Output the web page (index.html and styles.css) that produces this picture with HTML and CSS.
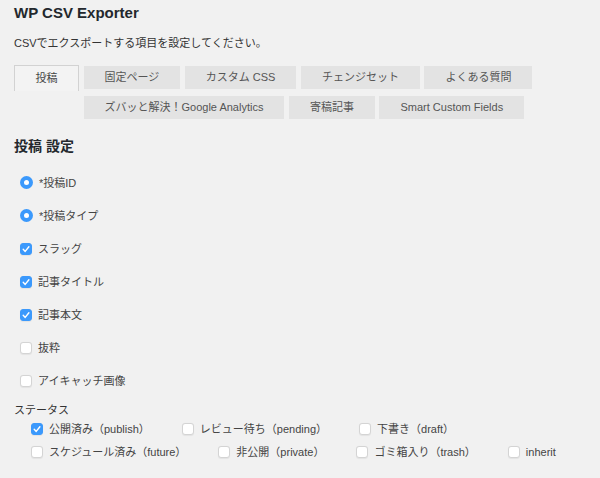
FILE: index.html
```html
<!DOCTYPE html>
<html lang="ja">
<head>
<meta charset="utf-8">
<title>WP CSV Exporter</title>
<link rel="stylesheet" href="styles.css">
</head>
<body>
<div class="wrap">
  <h1 class="title">WP CSV Exporter</h1>
  <p class="desc">CSVでエクスポートする項目を設定してください。</p>

  <div class="tabs">
    <a class="tab active">投稿</a>
    <a class="tab">固定ページ</a>
    <a class="tab">カスタム CSS</a>
    <a class="tab">チェンジセット</a>
    <a class="tab">よくある質問</a>
    <a class="tab">ズバッと解決！Google Analytics</a>
    <a class="tab">寄稿記事</a>
    <a class="tab">Smart Custom Fields</a>
  </div>

  <h2 class="section">投稿 設定</h2>

  <ul class="fields">
    <li class="field"><span class="radio"><span class="dot"></span></span><span class="lbl">*投稿ID</span></li>
    <li class="field"><span class="radio"><span class="dot"></span></span><span class="lbl">*投稿タイプ</span></li>
    <li class="field"><span class="cb on"><svg viewBox="0 0 12 12" width="12" height="12"><polyline points="3.2,6.3 5.2,8.4 8.9,3.7" fill="none" stroke="#fff" stroke-width="1.4" stroke-linecap="round" stroke-linejoin="round"/></svg></span><span class="lbl">スラッグ</span></li>
    <li class="field"><span class="cb on"><svg viewBox="0 0 12 12" width="12" height="12"><polyline points="3.2,6.3 5.2,8.4 8.9,3.7" fill="none" stroke="#fff" stroke-width="1.4" stroke-linecap="round" stroke-linejoin="round"/></svg></span><span class="lbl">記事タイトル</span></li>
    <li class="field"><span class="cb on"><svg viewBox="0 0 12 12" width="12" height="12"><polyline points="3.2,6.3 5.2,8.4 8.9,3.7" fill="none" stroke="#fff" stroke-width="1.4" stroke-linecap="round" stroke-linejoin="round"/></svg></span><span class="lbl">記事本文</span></li>
    <li class="field"><span class="cb"></span><span class="lbl">抜粋</span></li>
    <li class="field"><span class="cb"></span><span class="lbl">アイキャッチ画像</span></li>
  </ul>

  <div class="status-title">ステータス</div>
  <ul class="status">
    <li class="st"><span class="cb on"><svg viewBox="0 0 12 12" width="12" height="12"><polyline points="3.2,6.3 5.2,8.4 8.9,3.7" fill="none" stroke="#fff" stroke-width="1.4" stroke-linecap="round" stroke-linejoin="round"/></svg></span><span class="lbl">公開済み（publish）</span></li>
    <li class="st"><span class="cb"></span><span class="lbl">レビュー待ち（pending）</span></li>
    <li class="st"><span class="cb"></span><span class="lbl">下書き（draft）</span></li>
    <li class="st"><span class="cb"></span><span class="lbl">スケジュール済み（future）</span></li>
    <li class="st"><span class="cb"></span><span class="lbl">非公開（private）</span></li>
    <li class="st"><span class="cb"></span><span class="lbl">ゴミ箱入り（trash）</span></li>
    <li class="st"><span class="cb"></span><span class="lbl">inherit</span></li>
  </ul>
</div>
</body>
</html>
```

FILE: styles.css
```css
html, body {
  margin: 0;
  padding: 0;
  background: #f1f1f1;
}

body {
  font-family: "Liberation Sans", "Noto Sans CJK JP", sans-serif;
  font-size: 11px;
  color: #444;
}

.wrap {
  padding: 0 14px;
}

.title {
  margin: 0;
  padding-top: 4px;
  font-size: 15px;
  line-height: 18px;
  font-weight: bold;
  color: #23282d;
}

.desc {
  margin: 13px 0 0;
  font-size: 11px;
  line-height: 16px;
  color: #333;
}

.tabs {
  margin-top: 14px;
}

.tabs::after {
  content: "";
  display: block;
  clear: both;
}

.tab {
  float: left;
  height: 23px;
  line-height: 23px;
  margin: 1px 0 6px 4.5px;
  padding: 0 21px;
  background: #e3e3e3;
  color: #555;
  font-size: 11px;
  text-decoration: none;
}

.tab.active {
  margin: 0 0 7px 0;
  height: 25px;
  line-height: 24px;
  padding: 0 20.5px;
  border: 1px solid #d2d2d2;
  border-bottom: none;
  background: #f3f3f3;
  color: #444;
}

.section {
  margin: 11px 0 0;
  font-size: 14px;
  line-height: 20px;
  font-weight: bold;
  color: #23282d;
}

.fields {
  list-style: none;
  margin: 10px 0 0;
  padding: 0 0 0 6px;
}

.field {
  display: flex;
  align-items: center;
  height: 33px;
  gap: 6px;
}

.radio {
  width: 13px;
  height: 13px;
  border-radius: 50%;
  background: #3b99fc;
  display: flex;
  align-items: center;
  justify-content: center;
  flex: none;
}

.dot {
  width: 5px;
  height: 5px;
  border-radius: 50%;
  background: #fff;
}

.cb {
  box-sizing: border-box;
  width: 12px;
  height: 12px;
  border-radius: 3px;
  background: #fff;
  border: 1px solid #d4d4d4;
  box-shadow: 0 0.5px 1px rgba(0,0,0,0.06);
  flex: none;
  display: flex;
}

.cb.on {
  background: #3b99fc;
  border-color: #3b99fc;
}

.cb svg {
  display: block;
  margin: -1px;
}

.lbl {
  line-height: 16px;
  color: #444;
}

.status-title {
  margin-top: 5px;
  line-height: 16px;
  color: #333;
}

.status {
  list-style: none;
  margin: 1px 0 0;
  padding: 0 0 0 17px;
  display: flex;
  flex-wrap: wrap;
  column-gap: 32px;
  row-gap: 3px;
}

.st {
  display: flex;
  align-items: center;
  height: 20px;
  gap: 6px;
}
```
